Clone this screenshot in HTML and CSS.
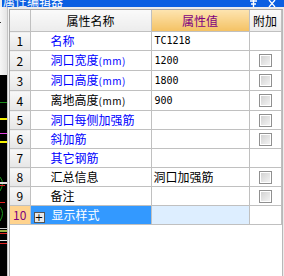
FILE: index.html
```html
<!DOCTYPE html>
<html lang="zh-CN">
<head>
  <meta charset="UTF-8" />
  <title>属性编辑器</title>
  <link rel="stylesheet" href="styles.css">
</head>
<body>

  <div class="titlebar">
    <span class="title-text">属性编辑器</span>
    <span class="title-btns">
      <svg width="9" height="7" viewBox="0 0 9 7"><path d="M1 1h7M4.5 0v7M2 4h5" stroke="#fff" stroke-width="1.4" fill="none"/></svg>
      <svg width="9" height="7" viewBox="0 0 9 7"><path d="M1 0l6 7M7 0l-6 7" stroke="#fff" stroke-width="1.3" fill="none"/></svg>
    </span>
  </div>

  <div class="main">
    <svg class="canvas" width="7" height="269" viewBox="0 0 7 269">
      <defs>
        <linearGradient id="g" x1="0" x2="1" y1="0" y2="0">
          <stop offset="0" stop-color="#f6f6f6"/>
          <stop offset="1" stop-color="#e4e4e4"/>
        </linearGradient>
      </defs>
      <rect x="0" y="0" width="7" height="68" fill="url(#g)"/>
      <rect x="0" y="15" width="1" height="1" fill="#333"/>
      <rect x="0" y="68" width="7" height="201" fill="#000"/>
      <rect x="0" y="95" width="7" height="1" fill="#1a8a1a"/>
      <rect x="0" y="111" width="7" height="2" fill="#f5f000"/>
      <rect x="0" y="126" width="7" height="1" fill="#e040e0"/>
      <rect x="0" y="134" width="7" height="2" fill="#f5f000"/>
      <path d="M0 170 Q5 176 0 184" stroke="#1a9a1a" fill="none"/>
      <rect x="0" y="175" width="7" height="2" fill="#ddd"/>
      <rect x="0" y="178" width="5" height="1" fill="#e02020"/>
      <rect x="0" y="195" width="5" height="1" fill="#e02020"/>
      <path d="M0 200 Q5 206 0 214" stroke="#1a9a1a" fill="none"/>
      <rect x="0" y="221" width="7" height="1" fill="#ccc"/>
      <rect x="0" y="223" width="7" height="2" fill="#9ab040"/>
      <rect x="0" y="226" width="7" height="1" fill="#e02020"/>
      <rect x="0" y="233" width="7" height="1" fill="#ddd"/>
      <rect x="0" y="236" width="7" height="1" fill="#e02020"/>
    </svg>
    <div class="sep"></div>

    <div class="panel">
      <table class="grid">
        <colgroup>
          <col class="c-num"><col class="c-name"><col class="c-val"><col class="c-add">
        </colgroup>
        <tr class="head">
          <th class="num"></th>
          <th>属性名称</th>
          <th class="hl">属性值</th>
          <th>附加</th>
        </tr>
        <tr>
          <td class="num">1</td>
          <td class="name blue">名称</td>
          <td class="val">TC1218</td>
          <td></td>
        </tr>
        <tr>
          <td class="num">2</td>
          <td class="name blue">洞口宽度<span class="mm">(mm)</span></td>
          <td class="val">1200</td>
          <td><span class="chk"></span></td>
        </tr>
        <tr>
          <td class="num">3</td>
          <td class="name blue">洞口高度<span class="mm">(mm)</span></td>
          <td class="val">1800</td>
          <td><span class="chk"></span></td>
        </tr>
        <tr>
          <td class="num">4</td>
          <td class="name">离地高度<span class="mm">(mm)</span></td>
          <td class="val">900</td>
          <td><span class="chk"></span></td>
        </tr>
        <tr>
          <td class="num">5</td>
          <td class="name blue">洞口每侧加强筋</td>
          <td class="val"></td>
          <td><span class="chk"></span></td>
        </tr>
        <tr>
          <td class="num">6</td>
          <td class="name blue">斜加筋</td>
          <td class="val"></td>
          <td><span class="chk"></span></td>
        </tr>
        <tr>
          <td class="num">7</td>
          <td class="name blue">其它钢筋</td>
          <td class="val"></td>
          <td></td>
        </tr>
        <tr>
          <td class="num">8</td>
          <td class="name">汇总信息</td>
          <td class="val cn">洞口加强筋</td>
          <td><span class="chk"></span></td>
        </tr>
        <tr>
          <td class="num">9</td>
          <td class="name">备注</td>
          <td class="val"></td>
          <td><span class="chk"></span></td>
        </tr>
        <tr class="sel">
          <td class="num">10</td>
          <td class="name"><span class="plus">+</span>显示样式</td>
          <td class="val"></td>
          <td></td>
        </tr>
      </table>
    </div>
    <div class="edge"></div>
  </div>

</body>
</html>
```

FILE: styles.css
```css
body {
  margin: 0;
  width: 284px;
  height: 276px;
  overflow: hidden;
  background: #ececec;
  font-family: "Noto Sans CJK SC", "Noto Sans", sans-serif;
  font-size: 12px;
  color: #000;
}

.titlebar {
  height: 7px;
  margin-left: 2px;
  background: #0b5fe2;
  color: #fff;
  display: flex;
  justify-content: space-between;
  overflow: hidden;
}

.title-text {
  font-size: 12px;
  line-height: 12px;
  margin-top: -5px;
  padding-left: 1px;
}

.title-btns {
  display: flex;
  gap: 10px;
  padding-right: 7px;
}

.main {
  display: flex;
  height: 269px;
}

.canvas {
  display: block;
  flex: none;
}

.sep {
  width: 2px;
  background: linear-gradient(to right, #c4c4c4 50%, #f2f2f2 50%);
}

.panel {
  width: 272px;
  margin-top: 2px;
  background: #fff;
  border-left: 1px solid #a8a8a8;
  border-top: 1px solid #a8a8a8;
  border-right: 1px solid #b8b8b8;
}

.edge {
  flex: 1;
}

.grid {
  border-collapse: collapse;
  table-layout: fixed;
  width: 271px;
}

.c-num { width: 20px; }
.c-name { width: 121px; }
.c-val { width: 98px; }
.c-add { width: 32px; }

.grid td,
.grid th {
  border: 1px solid #c0c0c0;
  height: 18px;
  padding: 0;
  line-height: 18px;
  white-space: nowrap;
  overflow: hidden;
}

.grid tr:first-child th {
  border-top: none;
}

.grid td:first-child,
.grid th:first-child {
  border-left: none;
}

.head th {
  height: 21px;
  font-weight: normal;
  text-align: center;
  background: linear-gradient(#fafafa, #ececec);
}

.head th.hl {
  background: linear-gradient(#fde4b0, #f4c264);
  color: #800080;
}

.num {
  text-align: center;
  background: linear-gradient(#f8f8f8, #e6e6e6);
}

.name {
  padding-left: 20px !important;
}

.blue {
  color: #0000ff;
}

.mm {
  font-size: 10px;
  letter-spacing: 0.5px;
}

.val {
  padding-left: 3px !important;
  font-family: "DejaVu Sans Mono", monospace;
  font-size: 10px;
}

.val.cn {
  font-family: "Noto Sans CJK SC", sans-serif;
  font-size: 12px;
  padding-left: 2px !important;
}

.chk {
  display: block;
  width: 11px;
  height: 11px;
  margin: 0 auto;
  border: 1px solid #909090;
  background: linear-gradient(135deg, #cfcfcf, #f6f6f6);
  box-shadow: inset 0 0 0 1px #fff;
}

.sel .num {
  background: #ffd38e;
  color: #800080;
}

.sel .name {
  background: #3399ff;
  color: #fff;
  padding-left: 3px !important;
}

.sel .val {
  background: #ddeeff;
}

.plus {
  display: inline-block;
  width: 9px;
  height: 9px;
  line-height: 9px;
  margin-right: 7px;
  vertical-align: -1px;
  border: 1px solid #555;
  background: #e8e8e8;
  color: #000;
  text-align: center;
  font-family: "DejaVu Sans", sans-serif;
  font-size: 10px;
}
```
